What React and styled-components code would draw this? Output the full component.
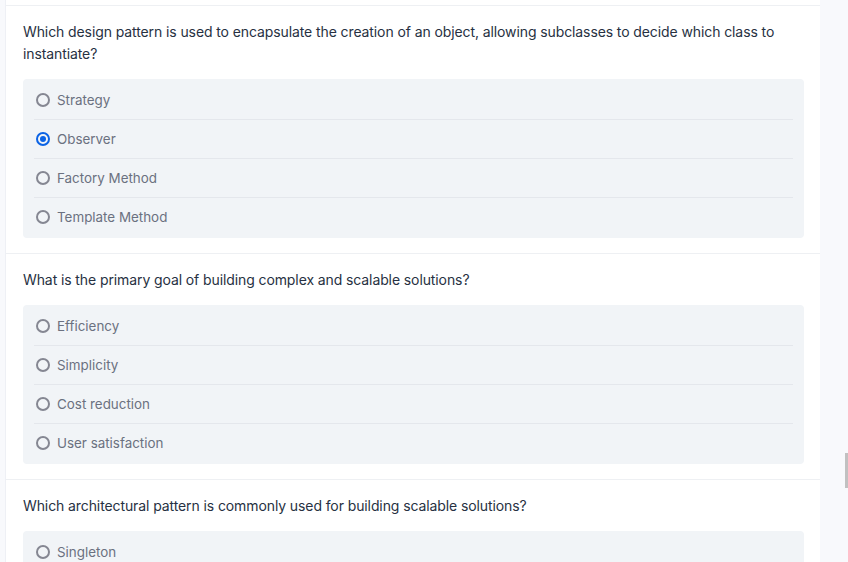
import React from "react";
import styled, { createGlobalStyle } from "styled-components";

const Global = createGlobalStyle`
  html, body { margin: 0; padding: 0; background: #f8f9fc; overflow: hidden; }
  body { font-family: Inter, "Noto Sans", sans-serif; }
`;

const Page = styled.div`
  display: flex;
  padding-left: 5px;
  height: 562px;
  overflow: hidden;
`;

const Card = styled.main`
  width: 815px;
  background: #ffffff;
  border-left: 1px solid #eef0f5;
  padding-top: 5px;
  box-sizing: border-box;
`;

const Block = styled.section`
  border-top: 1px solid #eef0f3;
  padding: 15px 16px 15px 17px;
`;

const Question = styled.p`
  margin: 0 0 14px;
  font-size: 14px;
  line-height: 22px;
  color: #273142;
  letter-spacing: -0.1px;
`;

const Options = styled.div`
  background: #f1f4f7;
  border-radius: 4px;
  padding: 2px 11px;
`;

const Row = styled.label`
  display: flex;
  align-items: center;
  gap: 7px;
  height: 38px;
  padding-left: 2px;
  border-bottom: 1px solid #e4e7ec;
  &:last-child { border-bottom: none; }
  font-size: 13.4px;
  color: #6b7180;
`;

const Radio = styled.span`
  width: 14px;
  height: 14px;
  box-sizing: border-box;
  border-radius: 50%;
  border: 2px solid ${(p) => (p.$checked ? "#0b63e5" : "#858792")};
  display: flex;
  align-items: center;
  justify-content: center;
  flex: none;
  &::after {
    content: "";
    display: ${(p) => (p.$checked ? "block" : "none")};
    width: 6px;
    height: 6px;
    border-radius: 50%;
    background: #0b63e5;
  }
`;

const Scrollbar = styled.div`
  position: fixed;
  right: 0;
  top: 453px;
  width: 3px;
  height: 35px;
  background: #c1c1c1;
`;

const data = [
  {
    q: "Which design pattern is used to encapsulate the creation of an object, allowing subclasses to decide which class to instantiate?",
    opts: ["Strategy", "Observer", "Factory Method", "Template Method"],
    sel: 1,
  },
  {
    q: "What is the primary goal of building complex and scalable solutions?",
    opts: ["Efficiency", "Simplicity", "Cost reduction", "User satisfaction"],
    sel: -1,
  },
  {
    q: "Which architectural pattern is commonly used for building scalable solutions?",
    opts: ["Singleton"],
    sel: -1,
  },
];

export default function App() {
  return (
    <>
      <Global />
      <Page>
        <Card>
          {data.map((d, i) => (
            <Block key={i}>
              <Question>{d.q}</Question>
              <Options>
                {d.opts.map((o, j) => (
                  <Row key={o}>
                    <Radio $checked={j === d.sel} />
                    {o}
                  </Row>
                ))}
              </Options>
            </Block>
          ))}
        </Card>
      </Page>
      <Scrollbar />
    </>
  );
}
